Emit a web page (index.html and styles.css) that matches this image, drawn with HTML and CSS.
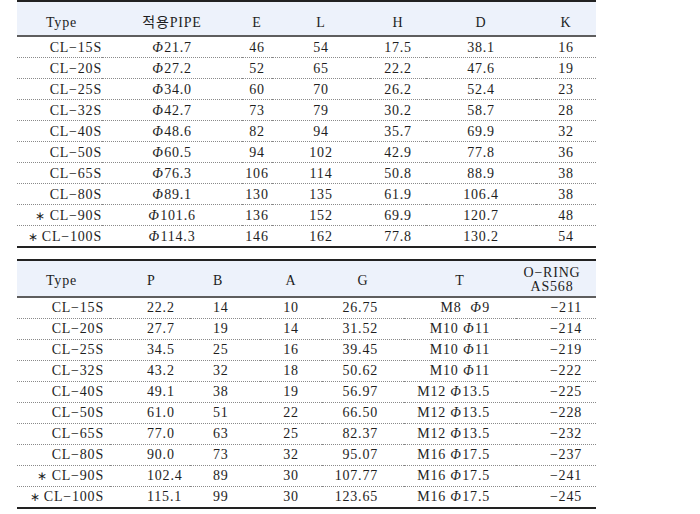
FILE: index.html
```html
<!DOCTYPE html>
<html lang="ko">
<head>
<meta charset="utf-8">
<title>CL-S</title>
<link rel="stylesheet" href="styles.css">
</head>
<body>
<div class="page">
<table class="spec spec1">
  <colgroup>
    <col class="c-type1"><col class="c-pipe"><col class="c-e"><col class="c-l"><col class="c-h"><col class="c-d"><col class="c-k">
  </colgroup>
  <thead>
    <tr><th class="th-type">Type</th><th>적용PIPE</th><th>E</th><th>L</th><th>H</th><th>D</th><th>K</th></tr>
  </thead>
  <tbody>
    <tr><td class="type">CL−15S</td><td><i>Φ</i>21.7</td><td>46</td><td>54</td><td>17.5</td><td>38.1</td><td>16</td></tr>
    <tr><td class="type">CL−20S</td><td><i>Φ</i>27.2</td><td>52</td><td>65</td><td>22.2</td><td>47.6</td><td>19</td></tr>
    <tr><td class="type">CL−25S</td><td><i>Φ</i>34.0</td><td>60</td><td>70</td><td>26.2</td><td>52.4</td><td>23</td></tr>
    <tr><td class="type">CL−32S</td><td><i>Φ</i>42.7</td><td>73</td><td>79</td><td>30.2</td><td>58.7</td><td>28</td></tr>
    <tr><td class="type">CL−40S</td><td><i>Φ</i>48.6</td><td>82</td><td>94</td><td>35.7</td><td>69.9</td><td>32</td></tr>
    <tr><td class="type">CL−50S</td><td><i>Φ</i>60.5</td><td>94</td><td>102</td><td>42.9</td><td>77.8</td><td>36</td></tr>
    <tr><td class="type">CL−65S</td><td><i>Φ</i>76.3</td><td>106</td><td>114</td><td>50.8</td><td>88.9</td><td>38</td></tr>
    <tr><td class="type">CL−80S</td><td><i>Φ</i>89.1</td><td>130</td><td>135</td><td>61.9</td><td>106.4</td><td>38</td></tr>
    <tr><td class="type"><span class="star">∗</span> CL−90S</td><td><i>Φ</i>101.6</td><td>136</td><td>152</td><td>69.9</td><td>120.7</td><td>48</td></tr>
    <tr class="last"><td class="type"><span class="star">∗</span> CL−100S</td><td><i>Φ</i>114.3</td><td>146</td><td>162</td><td>77.8</td><td>130.2</td><td>54</td></tr>
  </tbody>
</table>

<table class="spec spec2">
  <colgroup>
    <col class="c-type2"><col class="c-p"><col class="c-b"><col class="c-a"><col class="c-g"><col class="c-t"><col class="c-o">
  </colgroup>
  <thead>
    <tr><th class="th-type">Type</th><th class="th-p">P</th><th class="th-b">B</th><th>A</th><th>G</th><th>T</th><th class="th-o">O−RING<br>AS568</th></tr>
  </thead>
  <tbody>
    <tr><td class="type">CL−15S</td><td class="p">22.2</td><td class="b">14</td><td>10</td><td class="g">26.75</td><td class="t">M8  <i>Φ</i>9</td><td class="o">−211</td></tr>
    <tr><td class="type">CL−20S</td><td class="p">27.7</td><td class="b">19</td><td>14</td><td class="g">31.52</td><td class="t">M10 <i>Φ</i>11</td><td class="o">−214</td></tr>
    <tr><td class="type">CL−25S</td><td class="p">34.5</td><td class="b">25</td><td>16</td><td class="g">39.45</td><td class="t">M10 <i>Φ</i>11</td><td class="o">−219</td></tr>
    <tr><td class="type">CL−32S</td><td class="p">43.2</td><td class="b">32</td><td>18</td><td class="g">50.62</td><td class="t">M10 <i>Φ</i>11</td><td class="o">−222</td></tr>
    <tr><td class="type">CL−40S</td><td class="p">49.1</td><td class="b">38</td><td>19</td><td class="g">56.97</td><td class="t">M12 <i>Φ</i>13.5</td><td class="o">−225</td></tr>
    <tr><td class="type">CL−50S</td><td class="p">61.0</td><td class="b">51</td><td>22</td><td class="g">66.50</td><td class="t">M12 <i>Φ</i>13.5</td><td class="o">−228</td></tr>
    <tr><td class="type">CL−65S</td><td class="p">77.0</td><td class="b">63</td><td>25</td><td class="g">82.37</td><td class="t">M12 <i>Φ</i>13.5</td><td class="o">−232</td></tr>
    <tr><td class="type">CL−80S</td><td class="p">90.0</td><td class="b">73</td><td>32</td><td class="g">95.07</td><td class="t">M16 <i>Φ</i>17.5</td><td class="o">−237</td></tr>
    <tr><td class="type"><span class="star">∗</span> CL−90S</td><td class="p">102.4</td><td class="b">89</td><td>30</td><td class="g">107.77</td><td class="t">M16 <i>Φ</i>17.5</td><td class="o">−241</td></tr>
    <tr class="last"><td class="type"><span class="star">∗</span> CL−100S</td><td class="p">115.1</td><td class="b">99</td><td>30</td><td class="g">123.65</td><td class="t">M16 <i>Φ</i>17.5</td><td class="o">−245</td></tr>
  </tbody>
</table>
</div>
</body>
</html>
```

FILE: styles.css
```css
html, body {
  margin: 0;
  padding: 0;
  background: #ffffff;
}

.page {
  padding: 0 0 0 17px;
  font-family: "Liberation Serif", "Noto Sans CJK KR", serif;
  font-size: 14px;
  letter-spacing: 0.8px;
  color: #1e1e1e;
}

.spec {
  width: 579px;
  table-layout: fixed;
  border-collapse: separate;
  border-spacing: 0;
}

.spec2 {
  margin-top: 11px;
}

.spec th,
.spec td {
  padding: 0;
  text-align: center;
  font-weight: normal;
  white-space: pre;
}

.spec th {
  background: #edf2fb;
  border-top: 2px solid #222222;
  border-bottom: 2px solid #5e5e5e;
  line-height: 16px;
  padding-top: 4px;
  box-sizing: border-box;
}

.spec1 th {
  height: 37px;
  padding-top: 8px;
}

.spec2 th {
  height: 39px;
}

.spec td {
  line-height: 20px;
  border-bottom: 1px dotted #8a8a8a;
}

.spec1 td {
  line-height: 18px;
  padding-top: 2px;
}

.spec tr.last td {
  border-bottom: 2px solid #222222;
}

.spec i {
  font-style: italic;
  letter-spacing: 0.3px;
  margin-right: 1px;
}

.star {
  font-size: 12px;
  letter-spacing: 0;
}

/* table 1 columns */
.c-type1 { width: 85px; }
.c-pipe  { width: 140px; }
.c-e     { width: 30px; }
.c-l     { width: 98px; }
.c-h     { width: 56px; }
.c-d     { width: 110px; }
.c-k     { width: 60px; }

.spec .th-type {
  text-align: left;
  padding-left: 29px;
}

.spec td.type {
  text-align: right;
  padding-right: 0;
}

/* table 2 columns */
.c-type2 { width: 93px; }
.c-p     { width: 80px; }
.c-b     { width: 70px; }
.c-a     { width: 62px; }
.c-g     { width: 82px; }
.c-t     { width: 112px; }
.c-o     { width: 80px; }

.spec2 td.type {
  padding-right: 6px;
}

.spec2 .th-p,
.spec2 td.p {
  text-align: left;
  padding-left: 37px;
}

.spec2 .th-b,
.spec2 td.b {
  text-align: left;
  padding-left: 23px;
}

.spec2 td.g {
  text-align: right;
  padding-right: 26px;
}

.spec2 td.t {
  text-align: right;
  padding-right: 26px;
}

.spec2 td.o {
  text-align: right;
  padding-right: 14px;
}

.spec2 .th-o {
  line-height: 14px;
  padding-right: 8px;
  padding-top: 2px;
}
```
